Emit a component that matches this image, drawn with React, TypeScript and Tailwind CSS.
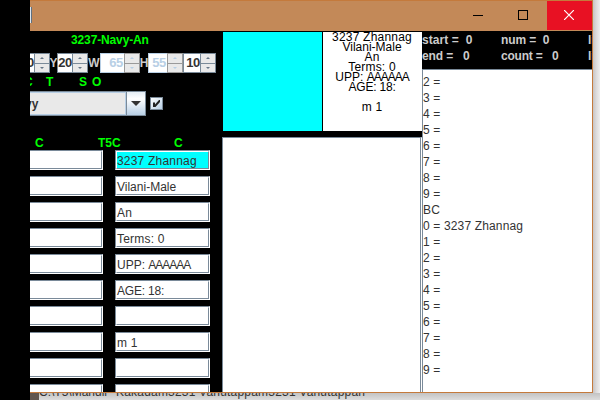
import React from "react";

const fields = ["3237 Zhannag", "Vilani-Male", "An", "Terms: 0", "UPP: AAAAAA", "AGE: 18:", "", "m 1", "", ""];
const card = ["3237 Zhannag", "Vilani-Male", "An", "Terms: 0", "UPP: AAAAAA", "AGE: 18:", "", "m 1"];
const log = ["2 =", "3 =", "4 =", "5 =", "6 =", "7 =", "8 =", "9 =", "BC", "0 = 3237 Zhannag", "1 =", "2 =", "3 =", "4 =", "5 =", "6 =", "7 =", "8 =", "9 ="];

function Line({ text = "" }: { text?: string }) {
  if (text.startsWith("UPP: ")) {
    return <span>UPP: <span className="tracking-[-1px]">{text.slice(5)}</span></span>;
  }
  if (text.startsWith("AGE")) return <span className="tracking-[-0.2px]">{text}</span>;
  if (text.startsWith("Vilani")) return <span>{text}</span>;
  return <span className="tracking-[0.2px]">{text}</span>;
}

function Field({ text, first, left }: { text?: string; first?: boolean; left?: boolean }) {
  return (
    <div className={`h-5 shrink-0 border-t border-r border-b border-t-[#7a8a99] border-r-white border-b-white ${left ? "w-[73px]" : "w-[95px] border-l border-l-[#7a8a99]"}`}>
      <div className={`h-full border-r border-b border-t border-t-white border-r-[#7a8a99] border-b-[#7a8a99] ${left ? "" : "border-l border-l-white"} ${first ? "bg-[#00ffff]" : "bg-white"}`}>
        <div className="text-[12px] leading-[18px] whitespace-pre text-[#333333]"><Line text={text} /></div>
      </div>
    </div>
  );
}

function Spinner({ value, width, disabled, cut }: { value: string; width: string; disabled?: boolean; cut?: boolean }) {
  const line = disabled ? "border-[#9a9a9a]" : "border-[#7a8a99]";
  const arrow = disabled ? "#b8cfe5" : "#667788";
  return (
    <div className={`flex h-5 shrink-0 ${width}`}>
      <div className={`flex min-w-0 flex-1 items-center justify-end overflow-hidden border-t border-b bg-white text-[13px] font-bold tracking-[-0.3px] ${cut ? "" : "border-l"} ${disabled ? "border-[#b8cfe5] text-[#b8cfe5] pr-px" : "border-[#7a8a99] text-[#333333]"}`}>
        <span className="leading-[18px]">{value}</span>
      </div>
      <div className={`flex w-4 shrink-0 flex-col border bg-[#e9e9e9] ${line}`}>
        <div className={`flex flex-1 items-center justify-center border-b ${line}`}>
          <svg width="4" height="2" viewBox="0 0 4 2"><path d="M2 0l2 2H0z" fill={arrow} /></svg>
        </div>
        <div className="flex flex-1 items-center justify-center">
          <svg width="4" height="2" viewBox="0 0 4 2"><path d="M0 0h4L2 2z" fill={arrow} /></svg>
        </div>
      </div>
    </div>
  );
}

function Letter({ children, width }: { children: string; width: string }) {
  return <div className={`flex h-5 shrink-0 items-center justify-center overflow-visible text-[12px] font-bold text-[#cccccc] ${width}`}>{children}</div>;
}

function Controls() {
  return (
    <section className="h-[361px] w-[192px] shrink-0 overflow-hidden bg-black">
      <div className="h-[22px] pl-[41px] pt-px text-[12px] leading-4 font-bold tracking-[-0.13px] text-[#00ff00]">3237-Navy-An</div>
      <div className="flex h-5">
        <Spinner value="0" width="w-5" cut />
        <Letter width="w-[7px]">Y</Letter>
        <Spinner value="20" width="w-[31px]" />
        <Letter width="w-3">W</Letter>
        <Spinner value="65" width="w-10" disabled />
        <Letter width="w-2">H</Letter>
        <Spinner value="55" width="w-[35px]" disabled />
        <Spinner value="10" width="w-[33px]" />
      </div>
      <div className="flex h-[18px] text-[12px] leading-[18px] font-bold text-[#00ff00]">
        <span className="flex w-4 justify-start"><span className="-ml-[6px]">C</span></span>
        <span className="w-[33px]">T</span>
        <span className="w-[13px]">S</span>
        <span>O</span>
      </div>
      <div className="flex h-[25px] items-center">
        <div className="flex h-[25px] w-[116px] shrink-0 border-t border-r border-b border-[#7a8a99]">
          <div className="flex w-24 items-center overflow-hidden border-t border-r border-b border-[#b8cfe5] bg-[#e9e9e9] text-[12px] font-bold text-[#333333]">
            <span className="-ml-[5px]">vy</span>
          </div>
          <div className="flex flex-1 items-center justify-center border-l border-[#7a8a99] bg-linear-to-b from-[#e4edf5] via-white via-30% to-[#b8cfe5]">
            <svg width="10" height="5" viewBox="0 0 10 5"><path d="M0 0h10L5 5z" fill="#333333" /></svg>
          </div>
        </div>
        <div className="ml-1 flex h-[13px] w-[13px] items-center justify-center border border-[#7a8a99] bg-linear-to-br from-white to-[#b8cfe5]">
          <svg width="7" height="7" viewBox="0 0 7 7"><path d="M0 2.5h2v2L6 0h1v2L2.5 7H0z" fill="#222222" /></svg>
        </div>
      </div>
      <div className="flex h-[34px] pt-[19px] text-[12px] leading-4 font-bold text-[#00ff00]">
        <span className="ml-[5px] w-[63px]">C</span>
        <span className="w-[76px]">T5C</span>
        <span>C</span>
      </div>
      <div className="flex flex-col gap-1.5">
        {fields.map((text, i) => (
          <div key={i} className="flex gap-3">
            <Field left />
            <Field text={text} first={i === 0} />
          </div>
        ))}
      </div>
    </section>
  );
}

function Preview() {
  return (
    <section className="flex h-[361px] w-[200px] shrink-0 flex-col bg-black">
      <div className="flex h-[100px] gap-px pt-px pl-px">
        <div className="w-[99px] bg-[#00ffff]" />
        <div className="w-[99px] overflow-hidden bg-white pr-px text-center text-[12px] text-black">
          {card.map((text, i) => <div key={i} className="h-[10px] leading-[10px] whitespace-pre"><Line text={text} /></div>)}
        </div>
      </div>
      <div className="mt-1.5 flex-1 border-t border-r border-l border-t-[#7a8a99] border-r-white border-l-[#7a8a99] bg-white">
        <div className="h-full border-r border-r-[#7a8a99]" />
      </div>
    </section>
  );
}

function Results() {
  return (
    <section className="flex h-[361px] w-[170px] shrink-0 flex-col bg-black">
      <div className="grid h-[38px] grid-cols-[79px_87px_4px] content-start overflow-hidden pt-px text-[12px] leading-4 font-bold whitespace-pre text-[#cccccc]">
        <span className="tracking-[0.08px]">start =  0</span><span className="tracking-[-0.1px]">num =  0</span><span>limit</span>
        <span className="tracking-[-0.1px]">end =   0</span><span className="tracking-[-0.2px]">count =   0</span><span>limit</span>
      </div>
      <div className="flex-1 border-t border-l border-[#7a8a99] bg-white pt-1 text-[12px] leading-4 tracking-[0.15px] whitespace-pre text-[#333333]">
        {log.map((text, i) => <div key={i}>{text}</div>)}
      </div>
    </section>
  );
}

export default function App() {
  return (
    <div className="flex h-[400px] w-[600px] overflow-hidden bg-[#dcdcdc] font-['Liberation_Sans',Arial,sans-serif]">
      <div className="w-[30px] shrink-0 bg-black" />
      <div className="w-[570px] shrink-0">
        <div className="flex h-[393px]">
          <main className="w-[563px] shrink-0 overflow-hidden border-t border-r border-b border-[#c47a3c] bg-black">
            <header className="flex h-[30px] bg-[#c38958]">
              <div className="mt-[6px] h-4 w-[2px] border-r border-[#607080] bg-[#dce6ee]" />
              <div className="ml-auto flex h-[29px]">
                <div className="flex w-[45px] justify-center pt-[9px] pr-[3px]"><svg width="10" height="10" shapeRendering="crispEdges"><path d="M0 5h10v1H0z" fill="#000" /></svg></div>
                <div className="flex w-[45px] justify-center pt-[9px] pr-[3px]"><svg width="10" height="10" shapeRendering="crispEdges"><path d="M0 0h10v10H0zM1 1v8h8V1z" fillRule="evenodd" fill="#000" /></svg></div>
                <div className="flex w-[45px] justify-center bg-[#e81123] pt-[9px] pr-px"><svg width="10" height="10"><path d="M0 0l10 10M10 0L0 10" stroke="#fff" strokeWidth="1.2" /></svg></div>
              </div>
            </header>
            <div className="flex h-[361px]"><Controls /><Preview /><Results /></div>
          </main>
          <div className="w-[7px] bg-linear-to-r from-[#c8c5c5] via-[#dedcdc] to-[#efefef]" />
        </div>
        <div className="flex h-[7px] overflow-hidden bg-linear-to-b from-[#c3c3c3] to-[#dddddd] text-[12px] leading-[14px] whitespace-pre text-[#333333]">
          <div className="w-[9px] shrink-0 bg-[#62564e]" />
          <div className="-mt-[8px] w-[77px] shrink-0">C:\T5\Mandir</div>
          <div className="-mt-[8px] tracking-[0.2px]">Kakadam3231 Vanutappam3231 Vanutappan</div>
        </div>
      </div>
    </div>
  );
}
